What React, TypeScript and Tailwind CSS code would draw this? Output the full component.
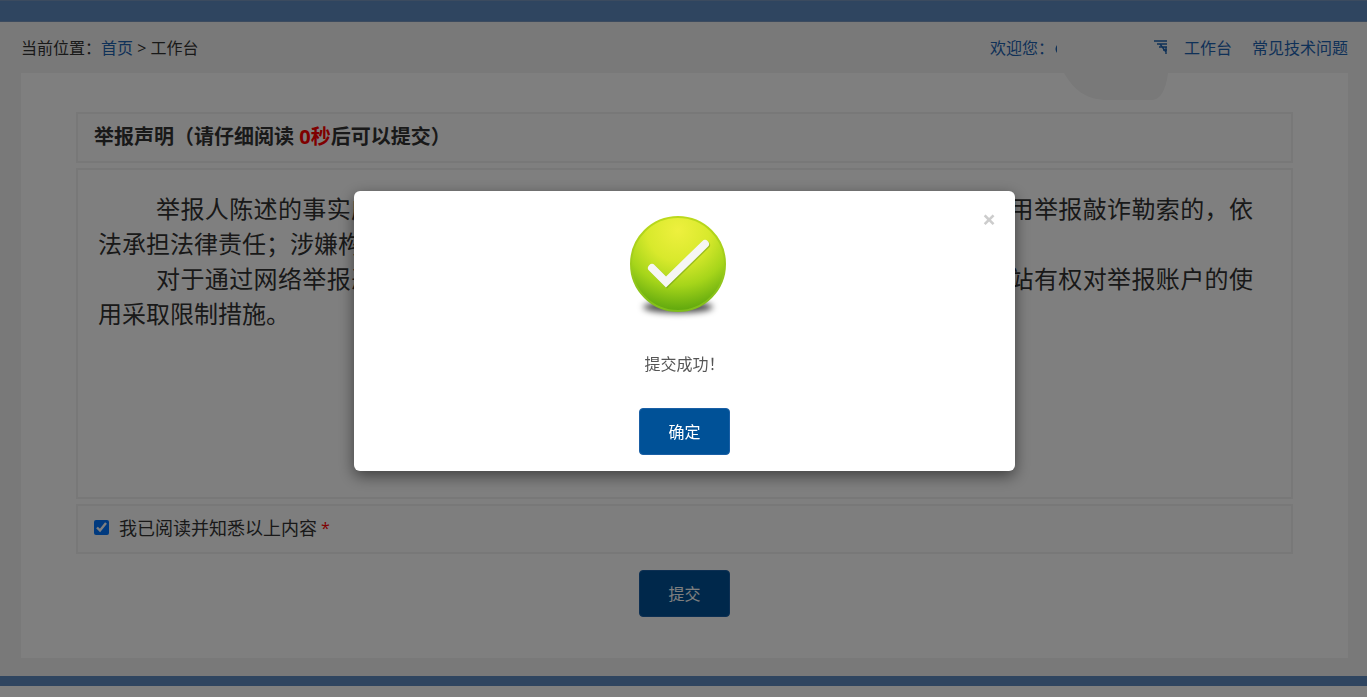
import { useState } from "react";

const statement = [
    "举报人陈述的事实应当客观真实，对借举报之名捏造事实、诬告陷害他人，或利用举报敲诈勒索的，依法承担法律责任；涉嫌构成犯罪的，依法追究刑事责任。",
    "对于通过网络举报恶意举报、虚假举报、重复举报等扰乱网络举报秩序的，本网站有权对举报账户的使用采取限制措施。",
];

const buttonClass = "w-[91px] h-[47px] rounded bg-[#005197] text-base text-white border border-[#1a5fa5]";

const SuccessIcon = () => (
    <svg width="110" height="112" viewBox="0 0 110 112" fill="none" aria-hidden="true">
        <defs>
            <radialGradient id="ball" cx="0.5" cy="0.14" r="0.95">
                <stop offset="0" stopColor="#eef03e" />
                <stop offset="0.35" stopColor="#d8e92c" />
                <stop offset="0.62" stopColor="#a6d51a" />
                <stop offset="0.85" stopColor="#6cb010" />
                <stop offset="1" stopColor="#4c980a" />
            </radialGradient>
            <linearGradient id="rim" x1="0" y1="0" x2="0" y2="1">
                <stop offset="0" stopColor="#bcd91c" />
                <stop offset="1" stopColor="#7fbe1a" />
            </linearGradient>
            <filter id="soft" x="-30%" y="-80%" width="160%" height="260%">
                <feGaussianBlur stdDeviation="3" />
            </filter>
        </defs>
        <ellipse cx="48" cy="96" rx="35" ry="6" fill="#000" fillOpacity="0.7" filter="url(#soft)" />
        <circle cx="48" cy="53" r="47" fill="url(#ball)" stroke="url(#rim)" strokeWidth="2" />
        <path d="M23 58l14 14L76 34" stroke="#5d8f10" strokeOpacity="0.45" strokeWidth="8" strokeLinecap="round" />
        <path d="M22 57l14 14L75 33" stroke="#f6f6f4" strokeWidth="8" strokeLinecap="round" strokeLinejoin="miter" />
    </svg>
);

const App = () => {
    const [agreed, setAgreed] = useState(true);
    const [open, setOpen] = useState(true);

    return (
        <div className="min-h-screen bg-white font-['Open_Sans','Noto_Sans_CJK_SC',sans-serif] text-base text-[#333]">
            <div className="h-[22px] bg-[#5e8ac0] border-y border-[#7896be]" />

            <div className="bg-[#f2f2f2] pl-[21px] pr-[19px] pb-[18px]">
                {/* Breadcrumb and account links */}
                <header className="flex items-center justify-between h-[51px]">
                    <nav>
                        当前位置：<a href="#" className="text-[#1e63b0]">首页</a> &gt; 工作台
                    </nav>
                    <div className="flex items-center text-[#1e63b0]">
                        <span>欢迎您：</span>
                        <span className="relative w-[114px] h-6 mr-4">
                            <svg className="absolute left-0 top-0" width="114" height="64" viewBox="0 0 114 64" fill="none" aria-hidden="true">
                                <path d="M10 37C20 54 32 64 54 64h44c8 0 14-10 16-27z" fill="#f2f2f2" />
                                <path d="M3 9q-3 4 0 8z" fill="#1e63b0" />
                                <path d="M100 5h13M103 8h10M105 11h8M109 14h4M112 11v7M106 8l6 8" stroke="#1e63b0" strokeWidth="1.4" />
                            </svg>
                        </span>
                        <a href="#" className="mr-5">工作台</a>
                        <a href="#">常见技术问题</a>
                    </div>
                </header>

                <main className="bg-white px-[55px] pt-[39px] pb-[41px]">
                    <div className="flex flex-col gap-[5px]">
                        <h1 className="flex items-center h-[51px] px-4 pb-0.5 bg-[#fcfcfc] border-2 border-[#f0f0f0] text-xl font-bold">
                            <span>举报声明（请仔细阅读 <span className="text-[#f00]">0秒</span>后可以提交）</span>
                        </h1>
                        <div className="min-h-[331px] px-5 py-[21px] border-2 border-[#f0f0f0] text-2xl leading-[35px] text-justify">
                            {statement.map((text) => (
                                <p key={text} className="indent-[58px] pr-[18px]">{text}</p>
                            ))}
                        </div>
                        <label className="flex items-center h-[50px] px-4 pb-[3px] bg-[#fcfcfc] border-2 border-[#f0f0f0] text-lg">
                            <input
                                type="checkbox"
                                checked={agreed}
                                onChange={(e) => setAgreed(e.target.checked)}
                                className="w-[15px] h-[15px] mr-[10px] accent-[#0075ff]"
                            />
                            我已阅读并知悉以上内容<span className="ml-1 text-base text-[#f00]">*</span>
                        </label>
                    </div>
                    <div className="flex justify-center mt-4">
                        <button type="button" disabled={!agreed} onClick={() => setOpen(true)} className={buttonClass}>
                            提交
                        </button>
                    </div>
                </main>
            </div>

            <div className="h-[10px] bg-[#5e8ac0]" />

            {/* Result dialog */}
            {open && (
                <div className="fixed inset-0 flex items-start justify-center bg-black/50 pt-[191px] pl-0.5">
                    <div
                        role="dialog"
                        aria-modal="true"
                        className="relative flex flex-col items-center w-[661px] pt-5 pb-4 rounded-md bg-white shadow-[0_5px_15px_rgba(0,0,0,0.5)]"
                    >
                        <button
                            type="button"
                            aria-label="关闭"
                            onClick={() => setOpen(false)}
                            className="absolute right-4 top-4 w-5 h-6 text-2xl leading-6 font-bold text-[#ccc]"
                        >
                            ×
                        </button>
                        <SuccessIcon />
                        <p className="mt-[29px] mb-8 text-[#555]">提交成功！</p>
                        <button type="button" onClick={() => setOpen(false)} className={buttonClass}>
                            确定
                        </button>
                    </div>
                </div>
            )}
        </div>
    );
};

export default App;
